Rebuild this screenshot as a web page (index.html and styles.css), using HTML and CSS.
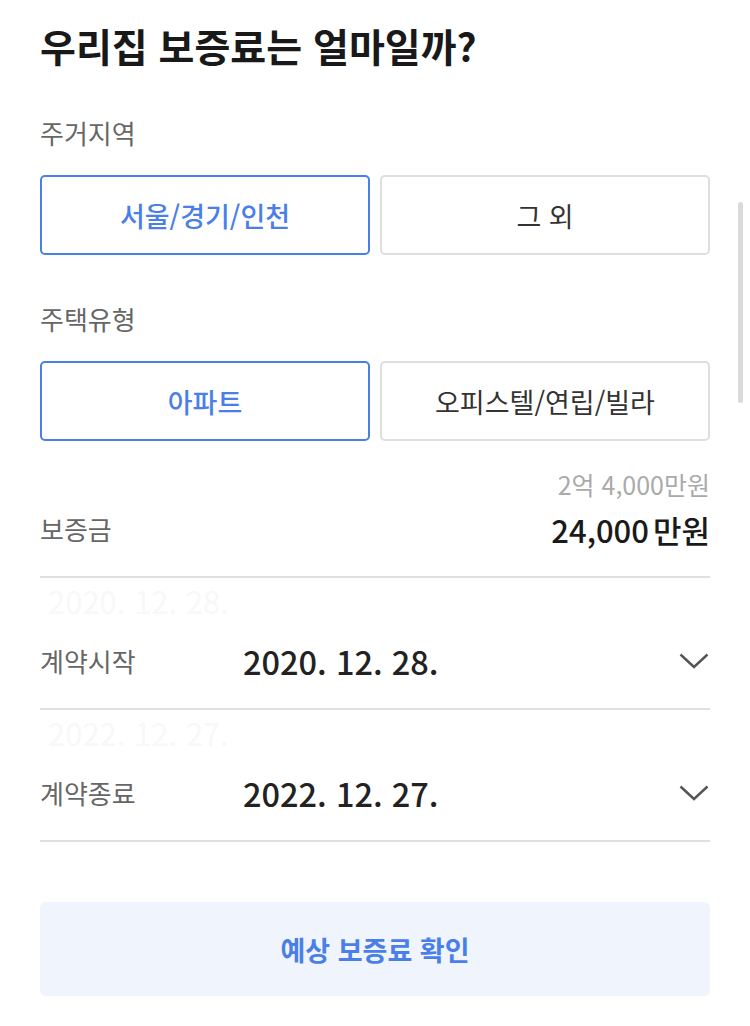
FILE: index.html
```html
<!DOCTYPE html>
<html lang="ko">
<head>
  <meta charset="UTF-8">
  <meta name="viewport" content="width=device-width, initial-scale=1.0">
  <title>우리집 보증료는 얼마일까?</title>
  <link rel="stylesheet" href="styles.css">
</head>
<body>
  <div class="container">
    <h1 class="title">우리집 보증료는 얼마일까?</h1>

    <div class="field">
      <div class="label">주거지역</div>
      <div class="choices">
        <button class="choice active">서울/경기/인천</button>
        <button class="choice">그 외</button>
      </div>
    </div>

    <div class="field">
      <div class="label">주택유형</div>
      <div class="choices">
        <button class="choice active">아파트</button>
        <button class="choice">오피스텔/연립/빌라</button>
      </div>
    </div>

    <div class="deposit">
      <div class="deposit-hint">2억 4,000만원</div>
      <div class="deposit-row">
        <span class="label">보증금</span>
        <span class="amount">24,000<span class="unit">만원</span></span>
      </div>
    </div>

    <div class="date-row">
      <div class="date-ghost">2020. 12. 28.</div>
      <div class="date-main">
        <span class="label">계약시작</span>
        <span class="date-value">2020. 12. 28.</span>
        <svg class="chevron" width="30" height="16" viewBox="0 0 30 16">
          <polyline points="1.5,1.5 15,14 28.5,1.5" fill="none" stroke="#555" stroke-width="2.4"/>
        </svg>
      </div>
    </div>

    <div class="date-row">
      <div class="date-ghost">2022. 12. 27.</div>
      <div class="date-main">
        <span class="label">계약종료</span>
        <span class="date-value">2022. 12. 27.</span>
        <svg class="chevron" width="30" height="16" viewBox="0 0 30 16">
          <polyline points="1.5,1.5 15,14 28.5,1.5" fill="none" stroke="#555" stroke-width="2.4"/>
        </svg>
      </div>
    </div>

    <button class="submit">예상 보증료 확인</button>
  </div>

  <div class="scrollbar"></div>
</body>
</html>
```

FILE: styles.css
```css
* {
  margin: 0;
  padding: 0;
  box-sizing: border-box;
  font-family: 'Noto Sans CJK KR', 'Noto Sans', sans-serif;
}
body {
  background: #ffffff;
  color: #1a1a1a;
}
.container {
  padding: 20px 40px 0;
}
.title {
  font-size: 39px;
  line-height: 50px;
  font-weight: 700;
  color: #191919;
}
.field {
  margin-top: 46px;
}
.field + .field {
  margin-top: 47px;
}
.label {
  font-size: 26px;
  line-height: 34px;
  color: #666;
}
.choices {
  display: grid;
  grid-template-columns: 1fr 1fr;
  gap: 10px;
  margin-top: 25px;
}
.choice {
  height: 80px;
  border: 2px solid #dedede;
  border-radius: 5px;
  background: #fff;
  font-size: 27px;
  color: #333;
  cursor: pointer;
}
.choice.active {
  border-color: #4a7fe8;
  color: #4a7fe8;
  font-weight: 500;
}
.deposit {
  margin-top: 29px;
  padding-bottom: 27px;
  border-bottom: 2px solid #e0e0e0;
}
.deposit-hint {
  text-align: right;
  font-size: 25px;
  line-height: 28px;
  color: #aaa;
}
.deposit-row {
  display: flex;
  justify-content: space-between;
  align-items: center;
  margin-top: 11px;
  height: 40px;
}
.amount {
  font-size: 31px;
  font-weight: 500;
  color: #1a1a1a;
}
.unit {
  margin-left: 4px;
}
.date-row {
  padding: 8px 0 31px;
  border-bottom: 2px solid #e0e0e0;
}
.date-ghost {
  padding-left: 8px;
  font-size: 31px;
  line-height: 30px;
  color: #f8f8f8;
}
.date-main {
  display: grid;
  grid-template-columns: 203px 1fr auto;
  align-items: center;
  height: 40px;
  margin-top: 21px;
}
.date-value {
  font-size: 32.5px;
  font-weight: 500;
  color: #222;
}
.chevron {
  display: block;
  margin-right: 1px;
}
.submit {
  display: block;
  width: 100%;
  height: 94px;
  margin-top: 60px;
  border: none;
  border-radius: 6px;
  background: #eff4fd;
  color: #4a7fe8;
  font-size: 27px;
  font-weight: 600;
  cursor: pointer;
}
.scrollbar {
  position: fixed;
  top: 202px;
  right: 7px;
  width: 5px;
  height: 201px;
  border-radius: 3px;
  background: #dadada;
}
```
